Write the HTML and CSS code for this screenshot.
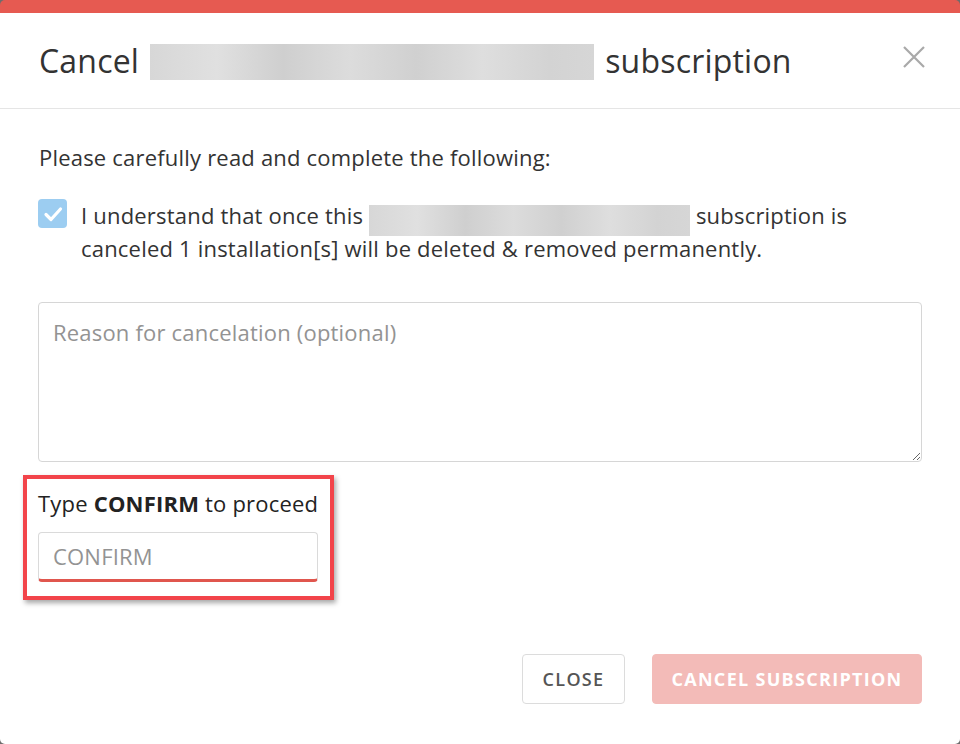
FILE: index.html
```html
<!DOCTYPE html>
<html lang="en">
<head>
<meta charset="utf-8">
<title>Cancel subscription</title>
<link rel="stylesheet" href="styles.css">
</head>
<body>
<div class="modal">
  <header class="modal-header">
    <h1 class="title">Cancel <span class="redact redact-title"></span> subscription</h1>
    <button class="close-x" aria-label="Close">
      <svg width="24" height="24" viewBox="0 0 24 24"><path d="M2 2 L22 22 M22 2 L2 22" stroke="#a9a9a9" stroke-width="2.2" fill="none"/></svg>
    </button>
  </header>
  <div class="modal-body">
    <p class="intro">Please carefully read and complete the following:</p>
    <label class="check-row">
      <span class="checkbox">
        <svg width="28" height="28" viewBox="0 0 28 28"><path d="M7 14.5 L12 19.5 L21.5 9" stroke="#fff" stroke-width="3.2" fill="none" stroke-linecap="round" stroke-linejoin="round"/></svg>
      </span>
      <span class="check-text">I understand that once this <span class="redact redact-inline"></span> subscription is canceled 1 installation[s] will be deleted &amp; removed permanently.</span>
    </label>
    <textarea class="reason" placeholder="Reason for cancelation (optional)"></textarea>
    <div class="highlight">
      <div class="confirm-label">Type <strong>CONFIRM</strong> to proceed</div>
      <input class="confirm-input" type="text" placeholder="CONFIRM">
    </div>
  </div>
  <footer class="modal-footer">
    <button class="btn btn-close">CLOSE</button>
    <button class="btn btn-cancel">CANCEL SUBSCRIPTION</button>
  </footer>
</div>
</body>
</html>
```

FILE: styles.css
```css
html, body {
  margin: 0;
  padding: 0;
  height: 100%;
  background: #6d6d6d;
}
body {
  font-family: "Open Sans", "Noto Sans", sans-serif;
  color: #333;
}
.modal {
  width: 960px;
  height: 744px;
  box-sizing: border-box;
  background: #fff;
  border-top: 13px solid #e65a51;
  border-radius: 5px;
  display: flex;
  flex-direction: column;
  overflow: hidden;
}
.modal-header {
  height: 95px;
  border-bottom: 1px solid #e5e5e5;
  display: flex;
  align-items: center;
  justify-content: space-between;
  padding: 0 34px 0 39px;
}
.title {
  margin: 0;
  font-size: 32px;
  font-weight: 500;
  color: #333;
  display: flex;
  align-items: center;
  gap: 11px;
  letter-spacing: 0.2px;
}
.redact {
  display: inline-block;
  background: linear-gradient(90deg, #d7d7d7 0%, #e0e0e0 15%, #cfcfcf 30%, #dcdcdc 45%, #d0d0d0 60%, #dedede 75%, #d3d3d3 90%, #d6d6d6 100%);
}
.redact-title {
  width: 444px;
  height: 36px;
  margin-top: 2px;
}
.redact-inline {
  width: 321px;
  height: 31px;
  margin: -4px 0;
  vertical-align: -8px;
}
.close-x {
  border: 0;
  background: none;
  padding: 0;
  width: 24px;
  height: 24px;
  margin-top: -8px;
}
.modal-body {
  padding: 32px 38px 0 38px;
  font-size: 22px;
  line-height: 32px;
  letter-spacing: 0.2px;
  color: #333;
}
.intro {
  margin: 0 0 26px 1px;
}
.check-row {
  display: flex;
  gap: 14px;
  align-items: flex-start;
}
.checkbox {
  flex: none;
  width: 29px;
  height: 29px;
  border-radius: 4px;
  background: #9ccdf1;
  display: flex;
  align-items: center;
  justify-content: center;
}
.check-text {
  flex: 1;
}
.reason {
  display: block;
  box-sizing: border-box;
  width: 884px;
  height: 160px;
  margin-top: 38px;
  border: 1px solid #d6d6d6;
  border-radius: 4px;
  padding: 13px 14px;
  font-family: inherit;
  font-size: 22px;
  letter-spacing: 0.2px;
  line-height: 32px;
  color: #333;
  resize: vertical;
  outline: none;
}
.reason::placeholder,
.confirm-input::placeholder {
  color: #939393;
}
.highlight {
  margin: 13px 0 0 -15px;
  width: 311px;
  box-sizing: border-box;
  border: 4px solid #f2444a;
  padding: 8px 12px 14px 11px;
  box-shadow: 2px 3px 5px rgba(0, 0, 0, 0.35);
}
.confirm-label {
  font-size: 22px;
  line-height: 32px;
  letter-spacing: 0.2px;
  white-space: nowrap;
  color: #222;
}
.confirm-label strong {
  font-weight: 700;
}
.confirm-input {
  display: block;
  box-sizing: border-box;
  width: 280px;
  height: 50px;
  margin-top: 13px;
  border: 1px solid #dadada;
  border-bottom: 3px solid #e0564e;
  border-radius: 4px;
  padding: 0 14px;
  font-family: inherit;
  font-size: 22px;
  letter-spacing: 0.2px;
  color: #333;
  outline: none;
}
.modal-footer {
  margin-top: auto;
  display: flex;
  justify-content: flex-end;
  gap: 27px;
  padding: 0 38px 40px 0;
}
.btn {
  height: 50px;
  font-family: inherit;
  font-size: 18px;
  font-weight: 600;
  letter-spacing: 1.3px;
  border-radius: 4px;
  padding: 0 10px;
  cursor: pointer;
}
.btn-close {
  background: #fff;
  border: 1px solid #dcdcdc;
  color: #555;
  width: 103px;
}
.btn-cancel {
  background: #f3bbb8;
  border: 1px solid #f3bbb8;
  color: #fff;
  width: 270px;
  font-weight: 700;
  letter-spacing: 1.3px;
}
```
